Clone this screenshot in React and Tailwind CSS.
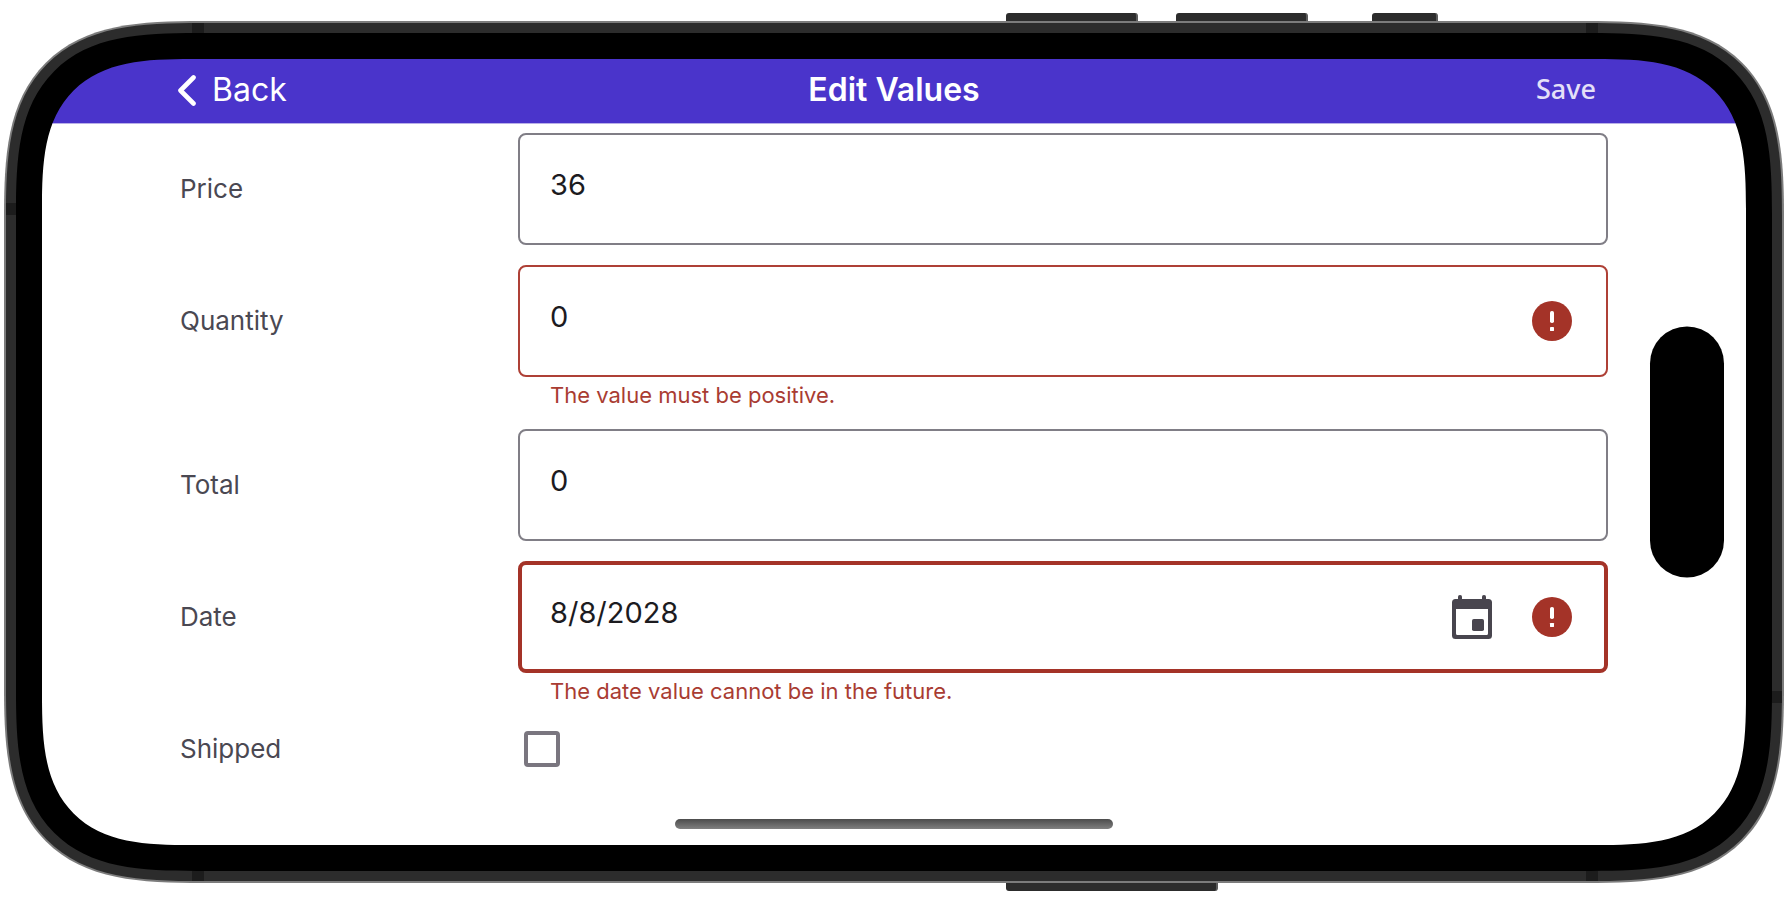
import { useState } from "react";

function ErrorIcon() {
  return (
    <svg className="size-10 shrink-0" viewBox="0 0 40 40" role="img" aria-label="Error">
      <circle cx="20" cy="20" r="20" fill="#a43328" />
      <rect x="18" y="10" width="4" height="12" rx="1.8" fill="#fff" />
      <rect x="18" y="26" width="4" height="4" rx="0.4" fill="#fff" />
    </svg>
  );
}

function CalendarIcon() {
  return (
    <svg className="h-11 w-10" viewBox="0 0 40 44" aria-hidden="true">
      <rect x="6" y="0" width="4" height="8" rx="1.8" fill="#48454e" />
      <rect x="30" y="0" width="4" height="8" rx="1.8" fill="#48454e" />
      <path
        fill="#48454e"
        fillRule="evenodd"
        d="M3.5 4h33A3.5 3.5 0 0 1 40 7.500v33A3.500 3.500 0 0 1 36.500 44h-33A3.500 3.500 0 0 1 0 40.500v-33A3.500 3.500 0 0 1 3.500 4ZM4 14v24.500A1.500 1.500 0 0 0 5.500 40h29a1.500 1.500 0 0 0 1.500-1.500V14Z"
      />
      <rect x="20" y="24" width="12" height="12" rx="1.800" fill="#48454e" />
    </svg>
  );
}

function Row({ id, label, error, children }) {
  return (
    <div className="grid grid-cols-[338px_1fr]">
      <label htmlFor={id} className="flex h-28 items-center pb-0.5 text-[26px] text-[#4a4852]">
        {label}
      </label>
      <div>
        {children}
        {error && (
          <p id={id + "-error"} className="h-8 pl-8 pt-0.5 text-[22px]/8 text-[#a93c32]">
            {error}
          </p>
        )}
      </div>
    </div>
  );
}

const inputClass = "min-w-0 flex-1 bg-transparent pb-2 text-[29px] text-[#1c1b1f] outline-none";

export default function App() {
  const [values, setValues] = useState({ price: "36", quantity: "0", total: "0", date: "8/8/2028" });
  const [shipped, setShipped] = useState(false);
  const edit = (key) => (e) => setValues({ ...values, [key]: e.target.value });

  return (
    <main className="bg-white px-1 font-['Inter',sans-serif]">
      <div className="flex h-[21px] items-end">
        <div className="ml-[1002px] h-2 w-[132px] rounded-t-[3px] border-r-2 border-[#5c5c5c] bg-[#2c2c2c]" />
        <div className="ml-[38px] h-2 w-[132px] rounded-t-[3px] border-r-2 border-[#5c5c5c] bg-[#2c2c2c]" />
        <div className="ml-16 h-2 w-[66px] rounded-t-[3px] border-r-2 border-[#5c5c5c] bg-[#2c2c2c]" />
      </div>

      <div className="rounded-[148px] bg-[#7c7c7c] p-0.5 supports-[corner-shape:squircle]:rounded-[198px] supports-[corner-shape:squircle]:[corner-shape:superellipse(1.55)]">
        <div className="relative rounded-[146px] bg-[#2c2c2c] p-2.5 supports-[corner-shape:squircle]:rounded-[195px] supports-[corner-shape:squircle]:[corner-shape:superellipse(1.55)]">
          <div className="absolute left-[186px] top-0 h-2.5 w-3 bg-[#1c1c1c]" />
          <div className="absolute right-[184px] top-0 h-2.5 w-3 bg-[#1c1c1c]" />
          <div className="absolute bottom-0 left-[186px] h-2.5 w-3 bg-[#1c1c1c]" />
          <div className="absolute bottom-0 right-[184px] h-2.5 w-3 bg-[#1c1c1c]" />
          <div className="absolute left-0 top-[180px] h-3 w-2.5 bg-[#1c1c1c]" />
          <div className="absolute bottom-[178px] right-0 h-3 w-2.5 bg-[#1c1c1c]" />

          <div className="rounded-[136px] bg-black p-[26px] supports-[corner-shape:squircle]:rounded-[181px] supports-[corner-shape:squircle]:[corner-shape:superellipse(1.55)]">
            <div className="relative overflow-hidden rounded-[112px] bg-black supports-[corner-shape:squircle]:rounded-[150px] supports-[corner-shape:squircle]:[corner-shape:superellipse(1.55)]">
              <header className="grid h-[65px] grid-cols-3 items-center border-b border-[#b9b0e8] bg-[#4a34cb] px-[136px] pb-0.5 text-white">
                <button type="button" className="flex items-center gap-3.5 justify-self-start text-[32px]">
                  <svg className="h-8 w-5" viewBox="0 0 20 32" fill="none" aria-hidden="true">
                    <path d="M15.500 3.500 2.500 16.500l13 13" stroke="#fff" strokeWidth="4.600" strokeLinecap="round" strokeLinejoin="round" />
                  </svg>
                  Back
                </button>
                <h1 className="justify-self-center whitespace-nowrap text-[32px] font-semibold">Edit Values</h1>
                <button type="button" className="mr-3.5 pb-0.5 justify-self-end font-['Noto_Sans',sans-serif] text-[27px] font-medium text-[#e4e0f8]">
                  Save
                </button>
              </header>

              <form className="flex flex-col gap-5 bg-white px-[138px] pb-[72px] pt-[9px]" onSubmit={(e) => e.preventDefault()}>
                <Row id="price" label="Price">
                  <div className="flex h-28 items-center rounded-lg border-2 border-[#807e86] pl-[30px] pr-[34px]">
                    <input id="price" className={inputClass} value={values.price} onChange={edit("price")} />
                  </div>
                </Row>
                <Row id="quantity" label="Quantity" error="The value must be positive.">
                  <div className="flex h-28 items-center rounded-lg border-2 border-[#ae4036] pl-[30px] pr-[34px]">
                    <input id="quantity" className={inputClass} value={values.quantity} onChange={edit("quantity")} aria-invalid="true" aria-describedby="quantity-error" />
                    <ErrorIcon />
                  </div>
                </Row>
                <Row id="total" label="Total">
                  <div className="flex h-28 items-center rounded-lg border-2 border-[#807e86] pl-[30px] pr-[34px]">
                    <input id="total" className={inputClass} value={values.total} onChange={edit("total")} />
                  </div>
                </Row>
                <Row id="date" label="Date" error="The date value cannot be in the future.">
                  <div className="flex h-28 items-center rounded-lg border-4 border-[#a43328] pl-7 pr-8">
                    <input id="date" className={inputClass} value={values.date} onChange={edit("date")} aria-invalid="true" aria-describedby="date-error" />
                    <button type="button" aria-label="Choose date" className="mr-10">
                      <CalendarIcon />
                    </button>
                    <ErrorIcon />
                  </div>
                </Row>
                <div className="grid h-12 grid-cols-[338px_1fr] items-center">
                  <label htmlFor="shipped" className="pb-0.5 text-[26px] text-[#4a4852]">
                    Shipped
                  </label>
                  <input
                    id="shipped"
                    type="checkbox"
                    checked={shipped}
                    onChange={(e) => setShipped(e.target.checked)}
                    className="ml-1.5 size-9 appearance-none rounded border-4 border-[#7a767f] checked:bg-[#4a34cb]"
                  />
                </div>
              </form>

              <div className="absolute right-[22px] top-1/2 h-[251px] w-[74px] -translate-y-1/2 rounded-full bg-black" />
              <div className="absolute bottom-4 left-1/2 h-2.5 w-[438px] -translate-x-1/2 rounded-full bg-linear-to-b from-[#4c4c4c] to-[#808080]" />
            </div>
          </div>
        </div>
      </div>

      <div className="flex h-[27px] items-start">
        <div className="ml-[1002px] h-2 w-[212px] rounded-b-[3px] border-r-2 border-[#5c5c5c] bg-[#2c2c2c]" />
      </div>
    </main>
  );
}
